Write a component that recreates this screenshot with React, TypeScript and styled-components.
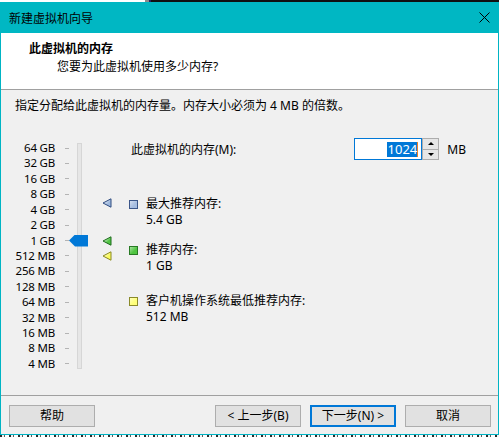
import React from "react";
import styled, { createGlobalStyle } from "styled-components";

const GlobalStyle = createGlobalStyle`
    html, body {
        margin: 0;
        padding: 0;
        background: #f0f0f0;
    }
    body {
        font-family: "Noto Sans", "Noto Sans CJK SC", sans-serif;
        font-size: 12px;
        color: #000;
    }
`;

const LEVELS = [
    "64 GB", "32 GB", "16 GB", "8 GB", "4 GB", "2 GB", "1 GB",
    "512 MB", "256 MB", "128 MB", "64 MB", "32 MB", "16 MB", "8 MB", "4 MB",
];

const ROW_PITCH = (230 - 14) / 14;

// position on the scale from a size in GB (log2)
const levelIndex = (gb: number) => 6 - Math.log2(gb);
const levelCenter = (gb: number) => 7 + levelIndex(gb) * ROW_PITCH;

const Screen = styled.div`
    width: 499px;
    height: 437px;
    display: flex;
    flex-direction: column;
    overflow: hidden;
`;

const TopStrip = styled.div`
    height: 2px;
    flex: none;
    background: linear-gradient(to right, #ffffff 0 145px, #8a8a8a 145px 149px, #2a1c60 149px 151px, #101010 151px);
`;

const BottomStrip = styled.div`
    flex: 1;
    background: repeating-linear-gradient(to right, #2b2b2b 0 2px, #f4f4f4 2px 4px, #5a5a5a 4px 5px, #ffffff 5px 9px);
`;

const Window = styled.div`
    height: 432px;
    flex: none;
    display: flex;
    flex-direction: column;
    border: 1px solid #00b4c4;
    border-top: none;
    background: #f0f0f0;
`;

const TitleBar = styled.div`
    height: 31px;
    flex: none;
    background: #00b7c3;
    display: flex;
    align-items: center;
    justify-content: space-between;
    margin: 0 -1px;
    padding: 0 9px 0 9px;

    & span {
        font-size: 12px;
        color: #000;
    }
`;

const Header = styled.div`
    flex: none;
    height: 57px;
    box-sizing: border-box;
    background: #fff;
    border-bottom: 1px solid #a0a0a0;
    padding: 8px 0 0 28px;

    & h1 {
        margin: 0;
        font-size: 12px;
        font-weight: bold;
        line-height: 16px;
    }

    & p {
        margin: 2px 0 0 28px;
        line-height: 16px;
    }
`;

const Body = styled.div`
    flex: 1;
    padding-top: 9px;
    box-sizing: border-box;
`;

const Intro = styled.div`
    padding-left: 14px;
    line-height: 14px;
`;

const Main = styled.div`
    display: grid;
    grid-template-columns: 128px 1fr;
    margin-top: 25px;
`;

const Scale = styled.div`
    position: relative;
    display: flex;
    margin-top: 3px;
    height: 230px;
`;

const ScaleRows = styled.div`
    display: flex;
    flex-direction: column;
    justify-content: space-between;
    height: 230px;
`;

const ScaleRow = styled.div`
    display: flex;
    align-items: center;
    height: 14px;

    & span {
        width: 54px;
        text-align: right;
        font-size: 11.5px;
        line-height: 14px;
        letter-spacing: -0.2px;
    }

    & i {
        width: 4px;
        height: 1px;
        margin-left: 10px;
        background: #b4b4b4;
    }
`;

const Track = styled.div`
    width: 3px;
    height: 224px;
    margin: 2px 0 0 8px;
    background: #e6e6e6;
    border: 1px solid #d6d6d6;
`;

const Thumb = styled.div`
    position: absolute;
    left: 68px;
    width: 19px;
    height: 12px;
    background: #0078d7;
    clip-path: polygon(0 50%, 6px 0, 100% 0, 100% 100%, 6px 100%);
`;

const Marker = styled.svg`
    position: absolute;
    left: 101px;
    width: 10px;
    height: 10px;
`;

const Info = styled.div`
    display: flex;
    flex-direction: column;
    padding-right: 32px;
`;

const MemoryRow = styled.div`
    display: flex;
    align-items: center;
    height: 22px;
    padding-left: 2px;

    & > label {
        flex: 1;
    }
`;

const NumberBox = styled.div`
    width: 68px;
    height: 22px;
    box-sizing: border-box;
    border: 1px solid #0078d7;
    background: #fff;
    display: flex;
    align-items: center;
    justify-content: flex-end;
    padding-right: 3px;
`;

const Selected = styled.span`
    background: #0078d7;
    color: #fff;
    line-height: 15px;
    font-size: 13px;
    padding: 0 0 0 1px;
    border-right: 1px solid #f08020;
`;

const Spinner = styled.div`
    width: 17px;
    height: 22px;
    display: flex;
    flex-direction: column;
`;

const SpinButton = styled.div<{ $down?: boolean }>`
    flex: 1;
    box-sizing: border-box;
    border: 1px solid #adadad;
    border-top-width: ${(p) => (p.$down ? "0" : "1px")};
    background: #e6e6e6;
    display: flex;
    align-items: center;
    justify-content: center;

    &::after {
        content: "";
        border-left: 3px solid transparent;
        border-right: 3px solid transparent;
        ${(p) => (p.$down ? "border-top: 3px solid #000;" : "border-bottom: 3px solid #000;")}
    }
`;

const Unit = styled.span`
    margin-left: 8px;
`;

const Item = styled.div<{ $gap: number }>`
    display: grid;
    grid-template-columns: 9px 1fr;
    column-gap: 8px;
    margin-top: ${(p) => p.$gap}px;
    line-height: 16px;
`;

const Swatch = styled.div<{ $fill: string; $edge: string }>`
    width: 9px;
    height: 9px;
    box-sizing: border-box;
    margin-top: 4px;
    border: 1px solid ${(p) => p.$edge};
    background: linear-gradient(135deg, #ffffff80, transparent 60%), ${(p) => p.$fill};
`;

const Footer = styled.div`
    height: 39px;
    flex: none;
    box-sizing: border-box;
    border-top: 1px solid #a0a0a0;
    padding: 9px 7px 0 8px;
    display: flex;
    align-items: flex-start;
    gap: 9px;

    & > :first-child {
        margin-right: auto;
    }
`;

const Button = styled.button<{ $default?: boolean }>`
    width: 86px;
    height: 22px;
    box-sizing: border-box;
    font-family: inherit;
    font-size: 12px;
    color: #000;
    background: #e1e1e1;
    border: ${(p) => (p.$default ? "2px solid #0078d7" : "1px solid #adadad")};
    padding: 0;
    line-height: 18px;
`;

const markers = [
    { gb: 5.4, fill: "#9fb9de", edge: "#2d4a7e" },
    { gb: 1, fill: "#52c644", edge: "#1c6a1c" },
    { gb: 0.5, fill: "#fbfb5c", edge: "#888820" },
];

const items = [
    { gap: 36, fill: "#a6bde0", edge: "#3b5689", title: "最大推荐内存:", value: "5.4 GB" },
    { gap: 14, fill: "#4fc440", edge: "#287a24", title: "推荐内存:", value: "1 GB" },
    { gap: 19, fill: "#ffff7a", edge: "#8a8a2a", title: "客户机操作系统最低推荐内存:", value: "512 MB" },
];

const App = () => {
    return (
        <Screen>
            <GlobalStyle />
            <TopStrip />
            <Window>
                <TitleBar>
                    <span>新建虚拟机向导</span>
                    <svg width="11" height="11" viewBox="0 0 11 11">
                        <path d="M0.5 0.5 L10.5 10.5 M10.5 0.5 L0.5 10.5" stroke="#000" strokeWidth="1" />
                    </svg>
                </TitleBar>
                <Header>
                    <h1>此虚拟机的内存</h1>
                    <p>您要为此虚拟机使用多少内存?</p>
                </Header>
                <Body>
                    <Intro>指定分配给此虚拟机的内存量。内存大小必须为 4 MB 的倍数。</Intro>
                    <Main>
                        <Scale>
                            <ScaleRows>
                                {LEVELS.map((l) => (
                                    <ScaleRow key={l}>
                                        <span>{l}</span>
                                        <i />
                                    </ScaleRow>
                                ))}
                            </ScaleRows>
                            <Track />
                            <Thumb style={{ top: levelCenter(1) - 6 }} />
                            {markers.map((m) => (
                                <Marker
                                    key={m.gb}
                                    viewBox="0 0 10 10"
                                    style={{ top: levelCenter(m.gb) - 5 }}
                                >
                                    <defs>
                                        <linearGradient id={`g${m.gb}`} x1="0" y1="0" x2="1" y2="1">
                                            <stop offset="0" stopColor="#ffffff" stopOpacity="0.7" />
                                            <stop offset="0.6" stopColor={m.fill} />
                                        </linearGradient>
                                    </defs>
                                    <polygon
                                        points="1,5 9,0.8 9,9.2"
                                        fill={`url(#g${m.gb})`}
                                        stroke={m.edge}
                                        strokeWidth="1"
                                        strokeLinejoin="round"
                                    />
                                </Marker>
                            ))}
                        </Scale>
                        <Info>
                            <MemoryRow>
                                <label>此虚拟机的内存(M):</label>
                                <NumberBox>
                                    <Selected>1024</Selected>
                                </NumberBox>
                                <Spinner>
                                    <SpinButton />
                                    <SpinButton $down />
                                </Spinner>
                                <Unit>MB</Unit>
                            </MemoryRow>
                            {items.map((it) => (
                                <Item key={it.title} $gap={it.gap}>
                                    <Swatch $fill={it.fill} $edge={it.edge} />
                                    <div>{it.title}</div>
                                    <span />
                                    <div>{it.value}</div>
                                </Item>
                            ))}
                        </Info>
                    </Main>
                </Body>
                <Footer>
                    <Button>帮助</Button>
                    <Button>&lt; 上一步(B)</Button>
                    <Button $default>下一步(N) &gt;</Button>
                    <Button>取消</Button>
                </Footer>
            </Window>
            <BottomStrip />
        </Screen>
    );
};

export default App;
